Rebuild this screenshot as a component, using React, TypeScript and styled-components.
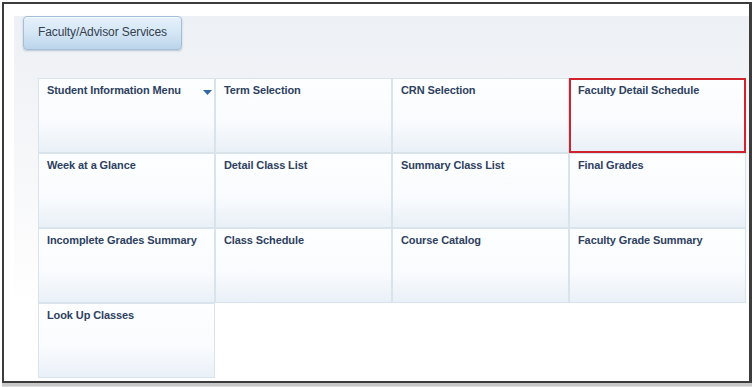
import styled, { createGlobalStyle } from 'styled-components';

const GlobalStyle = createGlobalStyle`
  html, body {
    margin: 0;
    padding: 0;
    background: #ffffff;
  }
  body {
    font-family: 'Liberation Sans', Arial, sans-serif;
  }
`;

type Item = { label: string; menu?: boolean; selected?: boolean };

const items: Item[] = [
  { label: 'Student Information Menu', menu: true },
  { label: 'Term Selection' },
  { label: 'CRN Selection' },
  { label: 'Faculty Detail Schedule', selected: true },
  { label: 'Week at a Glance' },
  { label: 'Detail Class List' },
  { label: 'Summary Class List' },
  { label: 'Final Grades' },
  { label: 'Incomplete Grades Summary' },
  { label: 'Class Schedule' },
  { label: 'Course Catalog' },
  { label: 'Faculty Grade Summary' },
  { label: 'Look Up Classes' },
];

const App = () => {
  return (
    <Screen>
      <GlobalStyle />
      <Frame>
        <Panel>
          <Tab>Faculty/Advisor Services</Tab>
          <Tiles>
            {items.map((item) => (
              <Tile key={item.label} $selected={item.selected}>
                <TileLabel>{item.label}</TileLabel>
                {item.menu && (
                  <Arrow viewBox='0 0 9 5' width={9} height={5}>
                    <path d='M0 0 L9 0 L4.5 5 Z' fill='#2f6aa6' />
                  </Arrow>
                )}
              </Tile>
            ))}
          </Tiles>
        </Panel>
      </Frame>
    </Screen>
  );
};

const Screen = styled.div`
  width: 755px;
  height: 387px;
  box-sizing: border-box;
  padding: 2px 3px 0 2px;
  background: #ffffff;
  overflow: hidden;
`;

const Frame = styled.div`
  height: 381px;
  box-sizing: border-box;
  border: 2px solid #3c3c3c;
  border-right-width: 3px;
  background: #ffffff;
  padding: 32px 0 0 10px;
  box-shadow: 0 3px 0 #c8c8c8, 0 6px 0 #dcdcdc;
`;

const Panel = styled.div`
  height: 100%;
  background: linear-gradient(to bottom, #edf0f4 0%, #f3f5f8 30%, #fbfbfc 65%, #ffffff 85%);
  padding: 0 0 0 24px;
  box-sizing: border-box;
`;

const Tab = styled.div`
  display: flex;
  align-items: center;
  width: fit-content;
  box-sizing: border-box;
  height: 34px;
  margin: -20px 0 0 -15px;
  padding: 0 14px 2px 14px;
  border: 1px solid #a3bed8;
  border-radius: 4px;
  background: linear-gradient(to bottom, #e6f1fb 0%, #d4e6f5 50%, #bcd4ea 100%);
  box-shadow: 0 1px 2px rgba(80, 110, 140, 0.35), inset 0 1px 0 #f4f9fd;
  color: #34404e;
  font-size: 12px;
  letter-spacing: -0.1px;
`;

const Tiles = styled.div`
  display: grid;
  grid-template-columns: repeat(4, 177px);
  grid-auto-rows: 75px;
  margin-top: 28px;
`;

const Tile = styled.div<{ $selected?: boolean }>`
  position: relative;
  display: flex;
  justify-content: space-between;
  align-items: flex-start;
  box-sizing: border-box;
  padding: 5px 2px 0 8px;
  border: 1px solid ${(p) => (p.$selected ? '#d0232b' : '#d9e3ec')};
  outline: ${(p) => (p.$selected ? '1px solid #d0232b' : 'none')};
  outline-offset: -2px;
  background: linear-gradient(to bottom, #fdfeff 0%, #f9fbfe 60%, #e9f0f7 100%);
  z-index: ${(p) => (p.$selected ? 1 : 0)};
`;

const TileLabel = styled.span`
  font-size: 11px;
  font-weight: bold;
  line-height: 13px;
  letter-spacing: -0.1px;
  color: #2e4160;
`;

const Arrow = styled.svg`
  flex: none;
  margin-top: 6px;
`;

export default App;
